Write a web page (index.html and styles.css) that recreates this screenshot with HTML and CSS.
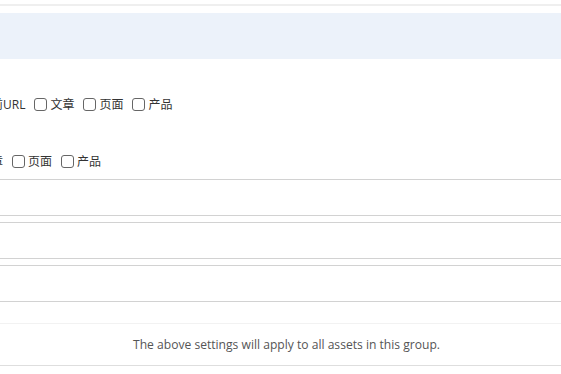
FILE: index.html
```html
<!DOCTYPE html>
<html lang="zh-CN">
  <head>
    <meta charset="UTF-8" />
    <meta name="viewport" content="width=device-width, initial-scale=1.0" />
    <link rel="stylesheet" href="styles.css">
    <title>资产组设置</title>
  </head>
  <body>
    <div class="topbar"></div>
    <div class="notice"></div>

    <div class="options">
      <div class="row row-first">
        <span class="label">当前URL</span>
        <label class="opt"><input type="checkbox" /><span>文章</span></label>
        <label class="opt"><input type="checkbox" /><span>页面</span></label>
        <label class="opt"><input type="checkbox" /><span>产品</span></label>
      </div>
      <div class="row row-second">
        <label class="opt"><input type="checkbox" /><span>文章</span></label>
        <label class="opt"><input type="checkbox" /><span>页面</span></label>
        <label class="opt"><input type="checkbox" /><span>产品</span></label>
      </div>
    </div>

    <div class="fields">
      <input type="text" class="field" />
      <input type="text" class="field" />
      <input type="text" class="field" />
    </div>

    <div class="footer">The above settings will apply to all assets in this group.</div>
  </body>
</html>
```

FILE: styles.css
```css
body {
  margin: 0;
  overflow: hidden;
  background-color: #fff;
  color: #333;
  font-family: "Open Sans", "Noto Sans CJK SC", sans-serif;
  font-size: 12px;
}
.topbar {
  height: 4px;
  border-bottom: 2px solid #efefef;
}
.notice {
  margin-top: 7px;
  height: 46px;
  background-color: #ecf2fa;
}
.options {
  padding-top: 36px;
}
.row {
  display: flex;
  align-items: center;
  height: 18px;
  white-space: nowrap;
}
.row-first {
  margin-left: -21px;
}
.row-second {
  margin-top: 39px;
  margin-left: -46px;
}
.opt {
  display: inline-flex;
  align-items: center;
  margin-left: 5px;
}
.opt input {
  appearance: none;
  width: 13px;
  height: 13px;
  margin: 0 3px 0 4px;
  border: 1px solid #666;
  border-radius: 3px;
  background: #fff;
}
.fields {
  display: flex;
  flex-direction: column;
  gap: 6px;
  margin-top: 9px;
  margin-left: -20px;
  margin-right: -20px;
}
.field {
  height: 37px;
  box-sizing: border-box;
  border: 1px solid #d2d2d2;
  background: #fff;
  padding: 0;
}
.footer {
  margin-top: 21px;
  padding-left: 12px;
  height: 43px;
  box-sizing: border-box;
  border-top: 1px solid #f2f2f2;
  border-bottom: 1px solid #dedede;
  display: flex;
  align-items: center;
  justify-content: center;
  color: #555;
  font-size: 12.1px;
}
```
